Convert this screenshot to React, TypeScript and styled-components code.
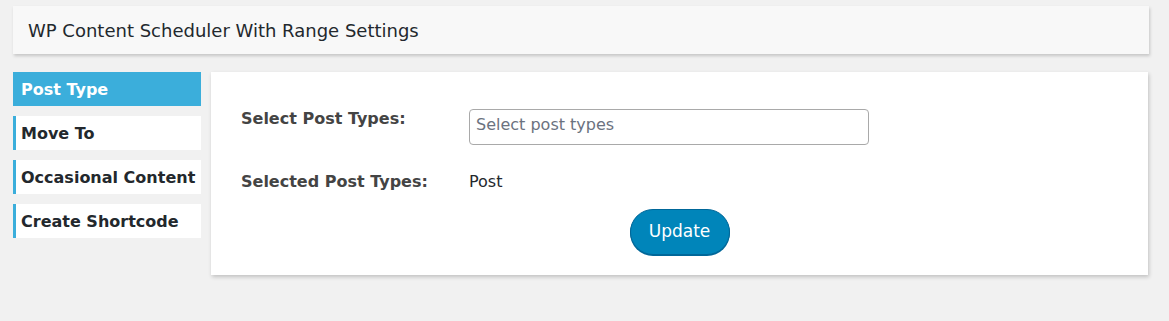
import React from "react";
import styled, { createGlobalStyle } from "styled-components";

const Global = createGlobalStyle`
  html, body { margin: 0; padding: 0; background: #f1f1f1; }
  body { font-family: "DejaVu Sans", "Noto Sans", sans-serif; color: #23282d; }
  * { box-sizing: border-box; }
`;

const Page = styled.div`
  padding: 6px 20px 40px 13px;
`;

const Header = styled.div`
  height: 48px;
  background: #f8f8f8;
  box-shadow: 1px 2px 3px rgba(0, 0, 0, 0.18);
  display: flex;
  align-items: center;
  padding-left: 15px;
`;

const Title = styled.h1`
  margin: 0;
  font-size: 18px;
  font-weight: 400;
  color: #23282d;
  padding-top: 0;
`;

const Body = styled.div`
  display: flex;
  gap: 10px;
  margin-top: 18px;
  align-items: flex-start;
`;

const Sidebar = styled.nav`
  width: 188px;
  display: flex;
  flex-direction: column;
  gap: 10px;
`;

const Tab = styled.div<{ $active?: boolean }>`
  height: 34px;
  display: flex;
  align-items: center;
  font-size: 16px;
  font-weight: 700;
  padding-left: ${(p) => (p.$active ? "8px" : "5px")};
  padding-top: 1px;
  background: ${(p) => (p.$active ? "#3baedb" : "#fff")};
  color: ${(p) => (p.$active ? "#fff" : "#23282d")};
  border-left: ${(p) => (p.$active ? "none" : "3px solid #3baedb")};
`;

const Panel = styled.section`
  width: 937px;
  background: #fff;
  box-shadow: 1px 2px 4px rgba(0, 0, 0, 0.2);
  padding: 37px 30px 20px;
`;

const Row = styled.div<{ $top?: number }>`
  display: grid;
  grid-template-columns: 228px 400px;
  align-items: start;
  margin-top: ${(p) => p.$top ?? 0}px;
`;

const Label = styled.label<{ $pt?: number }>`
  font-size: 16px;
  font-weight: 700;
  color: #444;
  line-height: 20px;
  padding-top: ${(p) => p.$pt ?? 0}px;
`;

const Input = styled.div`
  height: 36px;
  border: 1px solid #a9a9a9;
  border-radius: 4px;
  padding: 0 6px 6px;
  display: flex;
  align-items: center;
  font-size: 16px;
  color: #6b7280;
`;

const Value = styled.span`
  font-size: 16px;
  line-height: 20px;
  color: #23282d;
`;

const Actions = styled.div`
  display: flex;
  justify-content: center;
  margin-top: 17px;
`;

const Button = styled.button`
  width: 100px;
  height: 46px;
  border-radius: 23px;
  background: #0085ba;
  border: 1px solid #006799;
  box-shadow: 0 1px 0 #006799;
  color: #fff;
  font-family: inherit;
  font-size: 17px;
  padding: 0 0 2px;
`;

export default function App() {
  return (
    <>
      <Global />
      <Page>
        <Header>
          <Title>WP Content Scheduler With Range Settings</Title>
        </Header>
        <Body>
          <Sidebar>
            <Tab $active>Post Type</Tab>
            <Tab>Move To</Tab>
            <Tab>Occasional Content</Tab>
            <Tab>Create Shortcode</Tab>
          </Sidebar>
          <Panel>
            <Row>
              <Label $pt={0}>Select Post Types:</Label>
              <Input>Select post types</Input>
            </Row>
            <Row $top={27}>
              <Label>Selected Post Types:</Label>
              <Value>Post</Value>
            </Row>
            <Actions>
              <Button>Update</Button>
            </Actions>
          </Panel>
        </Body>
      </Page>
    </>
  );
}
